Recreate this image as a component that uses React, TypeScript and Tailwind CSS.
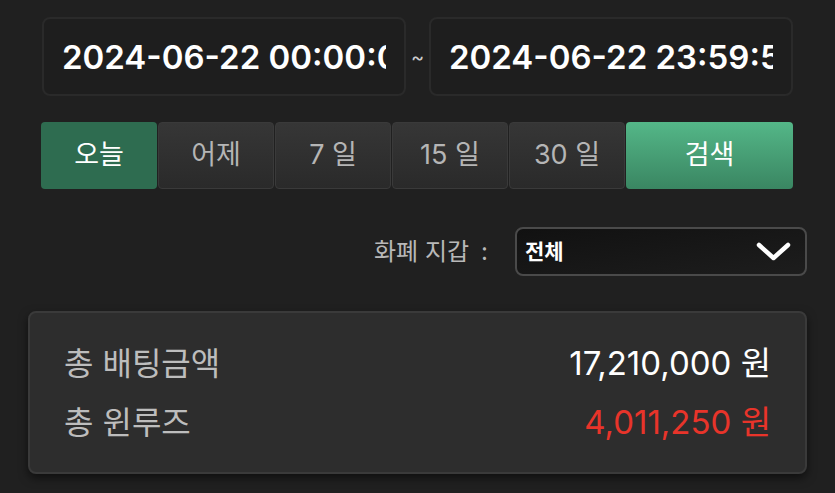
import React from "react";

const font = 'Inter, "Noto Sans CJK KR", sans-serif';

function DateBox({ value }: { value: string }) {
  return (
    <div className="flex-1 min-w-0 h-[79px] rounded-[8px] border-2 border-[#2a2a2a] bg-[#1e1e1e] flex items-center pl-[18px] pr-[18px]">
      <input
        readOnly
        value={value}
        className="w-full min-w-0 bg-transparent outline-none text-[33px] font-semibold text-white leading-none"
        style={{ fontFamily: font }}
      />
    </div>
  );
}

function PeriodButton({ label, active }: { label: string; active?: boolean }) {
  return (
    <div
      className={
        active
          ? "w-[116px] h-[67px] rounded-[4px] bg-[#2e6c50] flex items-center justify-center text-[27px] text-white"
          : "w-[116px] h-[67px] rounded-[4px] bg-gradient-to-b from-[#363636] to-[#2a2a2a] border border-[#3a3a3a] flex items-center justify-center text-[27px] text-[#b5b5b5]"
      }
    >
      {label}
    </div>
  );
}

export default function App() {
  return (
    <div className="w-[835px] h-[493px] bg-[#202020] overflow-hidden" style={{ fontFamily: font }}>
      <div className="flex items-center pt-[17px] pl-[42px] pr-[42px]">
        <DateBox value="2024-06-22 00:00:00" />
        <div className="w-[23px] text-center text-[20px] text-[#cccccc] leading-none">~</div>
        <DateBox value="2024-06-22 23:59:59" />
      </div>

      <div className="flex gap-px mt-[26px] pl-[41px] pr-[42px]">
        <PeriodButton label="오늘" active />
        <PeriodButton label="어제" />
        <PeriodButton label="7 일" />
        <PeriodButton label="15 일" />
        <PeriodButton label="30 일" />
        <div className="flex-1 h-[67px] rounded-[4px] bg-gradient-to-b from-[#54b788] to-[#3a8662] flex items-center justify-center text-[27px] text-white">
          검색
        </div>
      </div>

      <div className="flex items-center justify-end mt-[38px] pr-[28px]">
        <div className="text-[24px] text-[#b8b8b8] mr-[27px] flex items-center">
          <span>화폐 지갑</span>
          <span className="ml-[12px]">:</span>
        </div>
        <div className="w-[292px] h-[49px] rounded-[8px] border-2 border-[#4a4a4a] bg-gradient-to-br from-[#111111] to-[#1d1d1d] flex items-center justify-between pl-[8px] pr-[14px]">
          <span className="text-[21px] font-bold text-white">전체</span>
          <svg width="35" height="20" viewBox="0 0 35 20" fill="none">
            <polyline points="3,3 17.5,16 32,3" stroke="white" strokeWidth="4.5" strokeLinecap="round" strokeLinejoin="round" />
          </svg>
        </div>
      </div>

      <div className="mx-[28px] mt-[35px] h-[163px] rounded-[8px] border-2 border-[#3a3a3a] bg-[#2d2d2d] shadow-[0_4px_10px_rgba(0,0,0,0.55)] pt-[31px] px-[34px]">
        <div className="flex items-center justify-between h-[40px]">
          <span className="text-[32px] text-[#bdbdbd]">총 배팅금액</span>
          <span className="text-[33px] text-white">17,210,000 원</span>
        </div>
        <div className="flex items-center justify-between h-[40px] mt-[19px]">
          <span className="text-[32px] text-[#bdbdbd]">총 윈루즈</span>
          <span className="text-[33px] text-[#e8342a]">4,011,250 원</span>
        </div>
      </div>
    </div>
  );
}
